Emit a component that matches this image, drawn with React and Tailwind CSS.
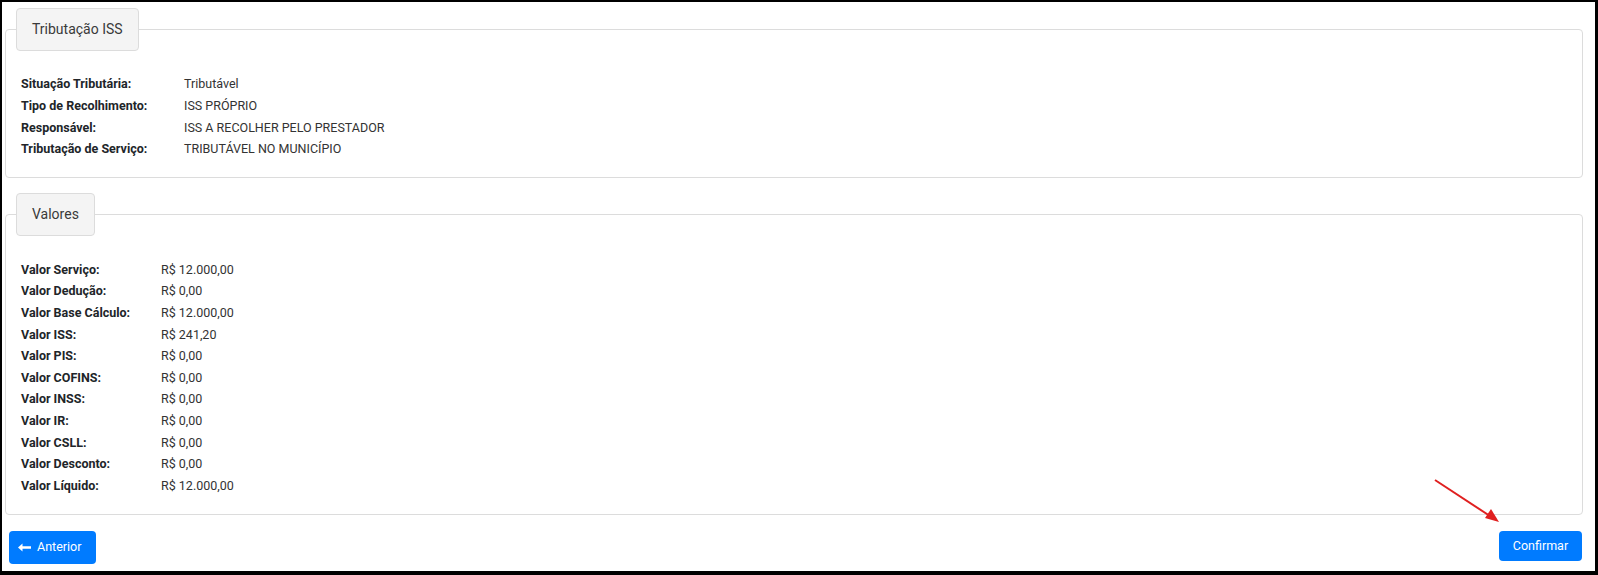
const font = { fontFamily: "Roboto, 'Liberation Sans', sans-serif" };

const tributacao = [
  ["Situação Tributária:", "Tributável"],
  ["Tipo de Recolhimento:", "ISS PRÓPRIO"],
  ["Responsável:", "ISS A RECOLHER PELO PRESTADOR"],
  ["Tributação de Serviço:", "TRIBUTÁVEL NO MUNICÍPIO"],
];

const valores = [
  ["Valor Serviço:", "R$ 12.000,00"],
  ["Valor Dedução:", "R$ 0,00"],
  ["Valor Base Cálculo:", "R$ 12.000,00"],
  ["Valor ISS:", "R$ 241,20"],
  ["Valor PIS:", "R$ 0,00"],
  ["Valor COFINS:", "R$ 0,00"],
  ["Valor INSS:", "R$ 0,00"],
  ["Valor IR:", "R$ 0,00"],
  ["Valor CSLL:", "R$ 0,00"],
  ["Valor Desconto:", "R$ 0,00"],
  ["Valor Líquido:", "R$ 12.000,00"],
];

const Section = ({ title, rows, labelWidth, className = "", padTop, padBottom }) => (
  <fieldset
    className={`border border-[#dcdcdc] rounded-[4px] pl-[15px] pr-4 ${padBottom} ${className}`}
  >
    <legend className="-ml-[5px] h-[43px] px-[15px] flex items-center bg-[#f4f4f4] border border-[#dcdcdc] rounded-[4px] text-[14px] text-[#3a3a3a]">
      {title}
    </legend>
    <div className={padTop}>
      {rows.map(([label, value]) => (
        <div key={label} className="flex h-[21.6px] items-center text-[12.5px]">
          <span className={`${labelWidth} shrink-0 font-bold text-[#212529]`}>
            {label}
          </span>
          <span className="text-[#333]">{value}</span>
        </div>
      ))}
    </div>
  </fieldset>
);

const ArrowLeftIcon = () => (
  <svg width="13" height="9" viewBox="0 0 13 9" fill="white">
    <path d="M0 4.5 L4.5 0.5 V3.3 H13 V5.7 H4.5 V8.5 Z" />
  </svg>
);

export default function App() {
  return (
    <div
      style={font}
      className="relative w-[1598px] h-[575px] overflow-hidden bg-white border-black border-t-2 border-l-2 border-r-[3px] border-b-4"
    >
      <div className="pl-[3px] pr-[12px] pt-[6px]">
        <Section
          title="Tributação ISS"
          rows={tributacao}
          labelWidth="w-[163px]"
          padTop="pt-[23px]"
          padBottom="pb-[17px]"
        />
        <Section
          title="Valores"
          rows={valores}
          labelWidth="w-[140px]"
          className="mt-[15px]"
          padTop="pt-[23px]"
          padBottom="pb-[17px]"
        />
      </div>

      <div className="flex items-start justify-between pl-[7px] pr-[13px] mt-[16px]">
        <button className="flex items-center gap-[6px] h-[33px] w-[87px] pl-[9px] rounded-[4px] bg-[#007bff] text-white text-[12.5px]">
          <ArrowLeftIcon />
          Anterior
        </button>
        <button className="h-[30px] w-[83px] rounded-[4px] bg-[#007bff] text-white text-[12.5px]">
          Confirmar
        </button>
      </div>

      {/* annotation arrow */}
      <svg
        className="absolute left-[1425px] top-[470px] pointer-events-none"
        width="80"
        height="60"
        viewBox="0 0 80 60"
      >
        <line x1="8" y1="8" x2="66" y2="46" stroke="#e02020" strokeWidth="2" />
        <path d="M72 50 L58 46 L64 37 Z" fill="#e02020" />
      </svg>
    </div>
  );
}
